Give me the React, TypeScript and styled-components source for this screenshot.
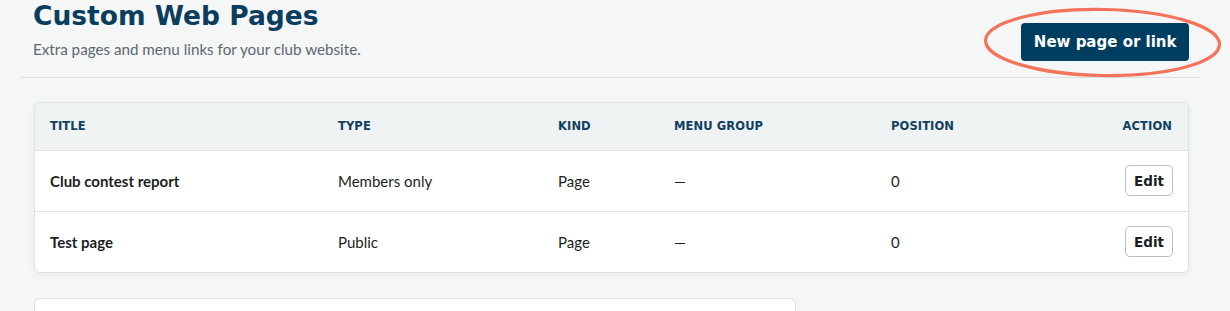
import React, { FC } from 'react';
import styled, { createGlobalStyle } from 'styled-components';

const GlobalStyle = createGlobalStyle`
  html, body {
    margin: 0;
    padding: 0;
    background: #f5f6f6;
  }
  body {
    font-family: 'Lato', 'Noto Sans', sans-serif;
    color: #1b1f23;
  }
`;

const heading = `'DejaVu Sans', 'Liberation Sans', sans-serif`;

const Page = styled.div`
  width: 1179px;
  margin-left: 21px;
`;

const Header = styled.header`
  display: flex;
  justify-content: space-between;
  align-items: flex-start;
  padding: 0 11px 18px 12px;
  border-bottom: 1px solid #dcdfe0;
`;

const TitleBlock = styled.div`
  display: flex;
  flex-direction: column;
`;

const Title = styled.h1`
  margin: 0;
  font-family: ${heading};
  font-weight: 700;
  font-size: 26.5px;
  line-height: 32px;
  color: #0b3d5f;
`;

const Subtitle = styled.p`
  margin: 7px 0 0;
  font-size: 15.2px;
  line-height: 20px;
  color: #5d6870;
`;

const ButtonWrap = styled.div`
  position: relative;
  align-self: flex-end;
  margin-bottom: -2px;
`;

const PrimaryButton = styled.button`
  display: block;
  height: 38px;
  padding: 0 12.5px;
  border: none;
  border-radius: 4px;
  background: #003e61;
  color: #ffffff;
  font-family: ${heading};
  font-weight: 700;
  font-size: 15px;
  cursor: pointer;
`;

const Highlight = styled.svg`
  position: absolute;
  left: -38px;
  top: -16px;
  width: 240px;
  height: 72px;
  pointer-events: none;
  overflow: visible;
`;

const Card = styled.div`
  margin: 24px 11px 0 13px;
  background: #ffffff;
  border: 1px solid #dde1e3;
  border-radius: 6px;
  box-shadow: 0 2px 8px rgba(0, 0, 0, 0.05);
  overflow: hidden;
`;

const Table = styled.table`
  width: 100%;
  border-collapse: collapse;
  table-layout: fixed;
`;

const HeadCell = styled.th<{ $align?: 'left' | 'right' }>`
  height: 46px;
  padding: 0 16px 1px 15px;
  background: #f0f3f4;
  border-bottom: 1px solid #dde1e3;
  text-align: ${(p) => p.$align ?? 'left'};
  font-family: ${heading};
  font-weight: 700;
  font-size: 11.5px;
  letter-spacing: 0.1px;
  text-transform: uppercase;
  color: #10405f;
`;

const Row = styled.tr`
  & + & td {
    border-top: 1px solid #dde1e3;
  }
`;

const Cell = styled.td<{ $bold?: boolean; $align?: 'left' | 'right' }>`
  height: 59px;
  padding: 0 15px 1px 15px;
  text-align: ${(p) => p.$align ?? 'left'};
  font-size: 15px;
  font-weight: ${(p) => (p.$bold ? 700 : 400)};
  color: #1b1f23;
`;

const EditButton = styled.button`
  height: 31px;
  padding: 0 8px;
  background: #ffffff;
  border: 1px solid #b9bdc0;
  border-radius: 5px;
  font-family: ${heading};
  font-weight: 700;
  font-size: 13.5px;
  color: #1b1f23;
  cursor: pointer;
`;

const NextCard = styled.div`
  width: 760px;
  height: 40px;
  margin: 25px 0 0 13px;
  background: #ffffff;
  border: 1px solid #dde1e3;
  border-bottom: none;
  border-radius: 6px 6px 0 0;
`;

interface PageRow {
  title: string;
  type: string;
  kind: string;
  group: string;
  position: number;
}

const rows: PageRow[] = [
  { title: 'Club contest report', type: 'Members only', kind: 'Page', group: '—', position: 0 },
  { title: 'Test page', type: 'Public', kind: 'Page', group: '—', position: 0 },
];

const App: FC = () => (
  <>
    <GlobalStyle />
    <Page>
      <Header>
        <TitleBlock>
          <Title>Custom Web Pages</Title>
          <Subtitle>Extra pages and menu links for your club website.</Subtitle>
        </TitleBlock>
        <ButtonWrap>
          <PrimaryButton>New page or link</PrimaryButton>
          <Highlight viewBox="0 0 240 72">
            <ellipse
              cx="119.5"
              cy="35.5"
              rx="117"
              ry="33"
              fill="none"
              stroke="#f3735b"
              strokeWidth="3.2"
              transform="rotate(1 119.5 35.5)"
            />
          </Highlight>
        </ButtonWrap>
      </Header>
      <Card>
        <Table>
          <colgroup>
            <col style={{ width: 288 }} />
            <col style={{ width: 220 }} />
            <col style={{ width: 116 }} />
            <col style={{ width: 217 }} />
            <col />
            <col style={{ width: 120 }} />
          </colgroup>
          <thead>
            <tr>
              <HeadCell>Title</HeadCell>
              <HeadCell>Type</HeadCell>
              <HeadCell>Kind</HeadCell>
              <HeadCell>Menu group</HeadCell>
              <HeadCell>Position</HeadCell>
              <HeadCell $align="right">Action</HeadCell>
            </tr>
          </thead>
          <tbody>
            {rows.map((r) => (
              <Row key={r.title}>
                <Cell $bold>{r.title}</Cell>
                <Cell>{r.type}</Cell>
                <Cell>{r.kind}</Cell>
                <Cell>{r.group}</Cell>
                <Cell>{r.position}</Cell>
                <Cell $align="right">
                  <EditButton>Edit</EditButton>
                </Cell>
              </Row>
            ))}
          </tbody>
        </Table>
      </Card>
      <NextCard />
    </Page>
  </>
);

export default App;
